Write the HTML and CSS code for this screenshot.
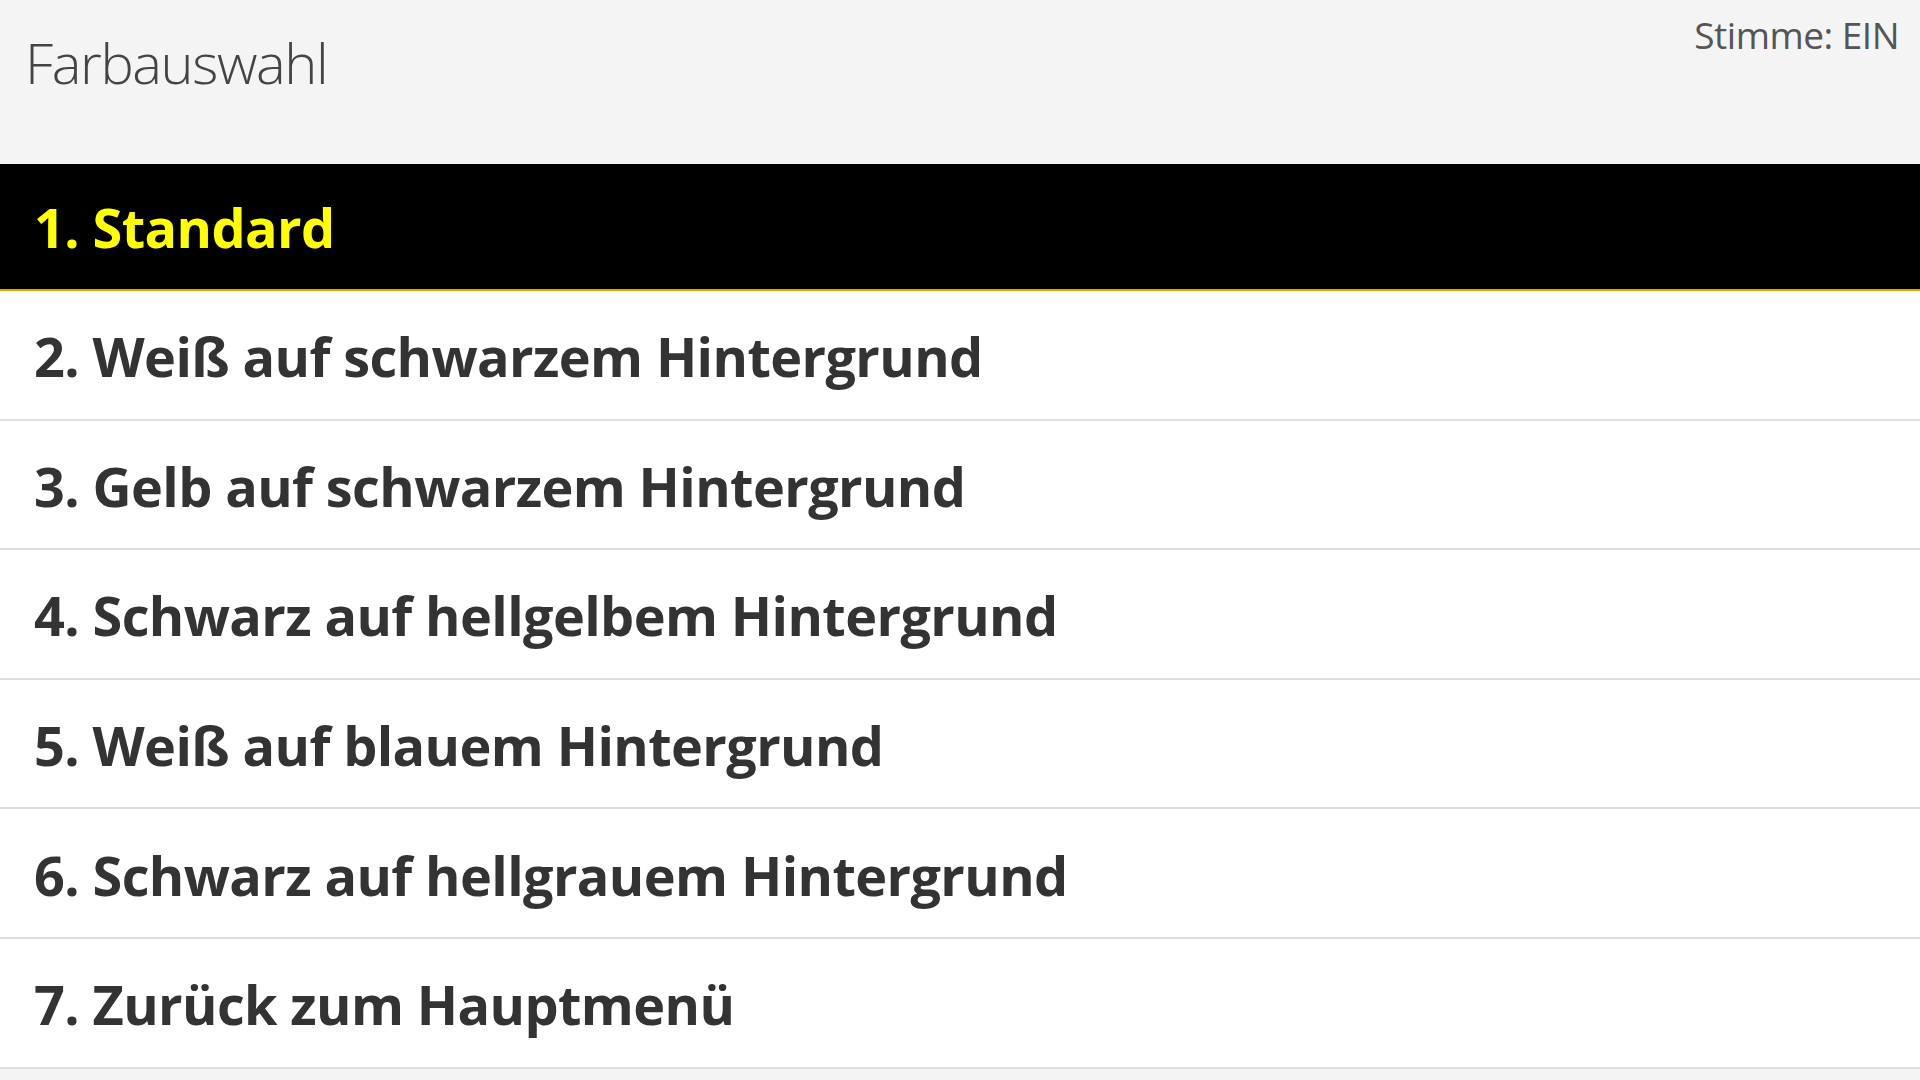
FILE: index.html
```html
<!DOCTYPE html>
<html lang="de">
<head>
  <meta charset="UTF-8" />
  <meta name="viewport" content="width=device-width, initial-scale=1.0" />
  <title>Farbauswahl</title>
  <link rel="stylesheet" href="styles.css">
</head>
<body>
  <header>
    <h1>Farbauswahl</h1>
    <div class="voice">Stimme: EIN</div>
  </header>
  <main>
    <ul class="menu">
      <li class="selected">1. Standard</li>
      <li>2. Weiß auf schwarzem Hintergrund</li>
      <li>3. Gelb auf schwarzem Hintergrund</li>
      <li>4. Schwarz auf hellgelbem Hintergrund</li>
      <li>5. Weiß auf blauem Hintergrund</li>
      <li>6. Schwarz auf hellgrauem Hintergrund</li>
      <li>7. Zurück zum Hauptmenü</li>
    </ul>
  </main>
</body>
</html>
```

FILE: styles.css
```css
html, body {
  margin: 0;
  padding: 0;
  height: 100%;
}
body {
  font-family: "Open Sans", "Noto Sans", sans-serif;
  background-color: #f4f4f4;
  color: #333;
  overflow: hidden;
}
header {
  height: 164px;
  box-sizing: border-box;
  display: flex;
  justify-content: space-between;
  align-items: flex-start;
  padding: 0 21px 0 25px;
  background-color: #f4f4f4;
}
h1 {
  margin: 29px 0 0 0;
  font-size: 56px;
  font-weight: 300;
  line-height: 1.2;
  letter-spacing: -1.4px;
  color: #444;
}
.voice {
  margin-top: 13px;
  font-size: 37px;
  line-height: 1.2;
  letter-spacing: -0.5px;
  color: #555;
}
.menu {
  list-style: none;
  margin: 0;
  padding: 0;
  background-color: #fff;
}
.menu li {
  height: 129.6px;
  box-sizing: border-box;
  display: flex;
  align-items: center;
  padding: 3px 0 0 34px;
  font-size: 54px;
  font-weight: 700;
  letter-spacing: -0.6px;
  color: #333;
  border-bottom: 2px solid #ddd;
}
.menu li.selected {
  height: 127px;
  padding: 0 0 0 34px;
  background-color: #000;
  color: #ffff00;
  border-bottom: 2px solid #e8a000;
}
```
